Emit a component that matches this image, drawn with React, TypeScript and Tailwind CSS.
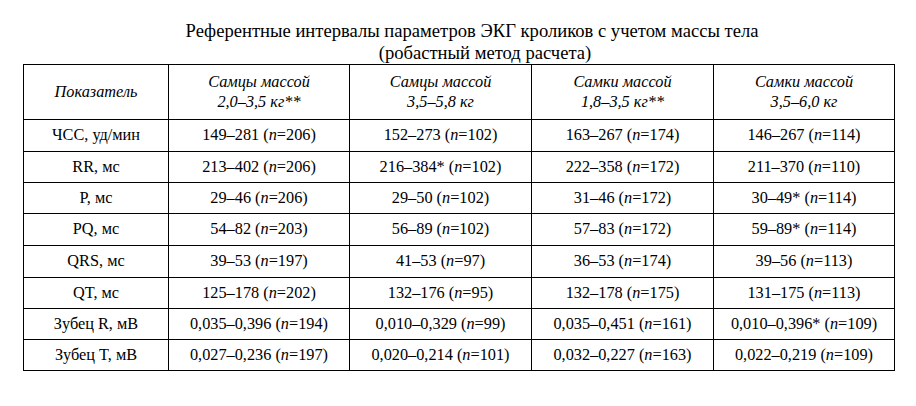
const headers = [
  ["Самцы массой", "2,0–3,5 кг**"],
  ["Самцы массой", "3,5–5,8 кг"],
  ["Самки массой", "1,8–3,5 кг**"],
  ["Самки массой", "3,5–6,0 кг"],
];

// [range, n] per group
const rows: { name: string; h: string; cells: [string, string][] }[] = [
  { name: "ЧСС, уд/мин", h: "h-[32px]", cells: [["149–281", "206"], ["152–273", "102"], ["163–267", "174"], ["146–267", "114"]] },
  { name: "RR, мс", h: "h-[31px]", cells: [["213–402", "206"], ["216–384*", "102"], ["222–358", "172"], ["211–370", "110"]] },
  { name: "P, мс", h: "h-[31px]", cells: [["29–46", "206"], ["29–50", "102"], ["31–46", "172"], ["30–49*", "114"]] },
  { name: "PQ, мс", h: "h-[32px]", cells: [["54–82", "203"], ["56–89", "102"], ["57–83", "172"], ["59–89*", "114"]] },
  { name: "QRS, мс", h: "h-[32px]", cells: [["39–53", "197"], ["41–53", "97"], ["36–53", "174"], ["39–56", "113"]] },
  { name: "QT, мс", h: "h-[31px]", cells: [["125–178", "202"], ["132–176", "95"], ["132–178", "175"], ["131–175", "113"]] },
  { name: "Зубец R, мВ", h: "h-[31px]", cells: [["0,035–0,396", "194"], ["0,010–0,329", "99"], ["0,035–0,451", "161"], ["0,010–0,396*", "109"]] },
  { name: "Зубец T, мВ", h: "h-[31px]", cells: [["0,027–0,236", "197"], ["0,020–0,214", "101"], ["0,032–0,227", "163"], ["0,022–0,219", "109"]] },
];

export default function App() {
  return (
    <div className="w-[916px] h-[406px] bg-white text-black font-['Liberation_Serif','Times_New_Roman',serif]">
      <div className="pt-[20px] text-[18.6px] leading-[22px]">
        <div className="text-center pl-[28px]">
          Референтные интервалы параметров ЭКГ кроликов с учетом массы тела
        </div>
        <div className="text-center pl-[54px]">(робастный метод расчета)</div>
      </div>

      <table className="ml-[23px] w-[871px] table-fixed border-collapse text-[16.3px]">
        <colgroup>
          <col className="w-[145px]" />
          <col className="w-[181px]" />
          <col className="w-[182px]" />
          <col className="w-[182px]" />
          <col className="w-[181px]" />
        </colgroup>
        <thead>
          <tr className="h-[55px]">
            <th className="border border-black font-normal italic p-0 align-middle">
              Показатель
            </th>
            {headers.map((h, i) => (
              <th
                key={i}
                className="border border-black font-normal italic p-0 align-middle leading-[20px]"
              >
                <div>{h[0]}</div>
                <div>{h[1]}</div>
              </th>
            ))}
          </tr>
        </thead>
        <tbody>
          {rows.map((r, i) => (
            <tr key={i} className={r.h}>
              <td className="border border-black text-center p-0">{r.name}</td>
              {r.cells.map((c, j) => (
                <td key={j} className="border border-black text-center p-0 whitespace-nowrap">
                  {c[0]} (<i>n</i>={c[1]})
                </td>
              ))}
            </tr>
          ))}
        </tbody>
      </table>
    </div>
  );
}
